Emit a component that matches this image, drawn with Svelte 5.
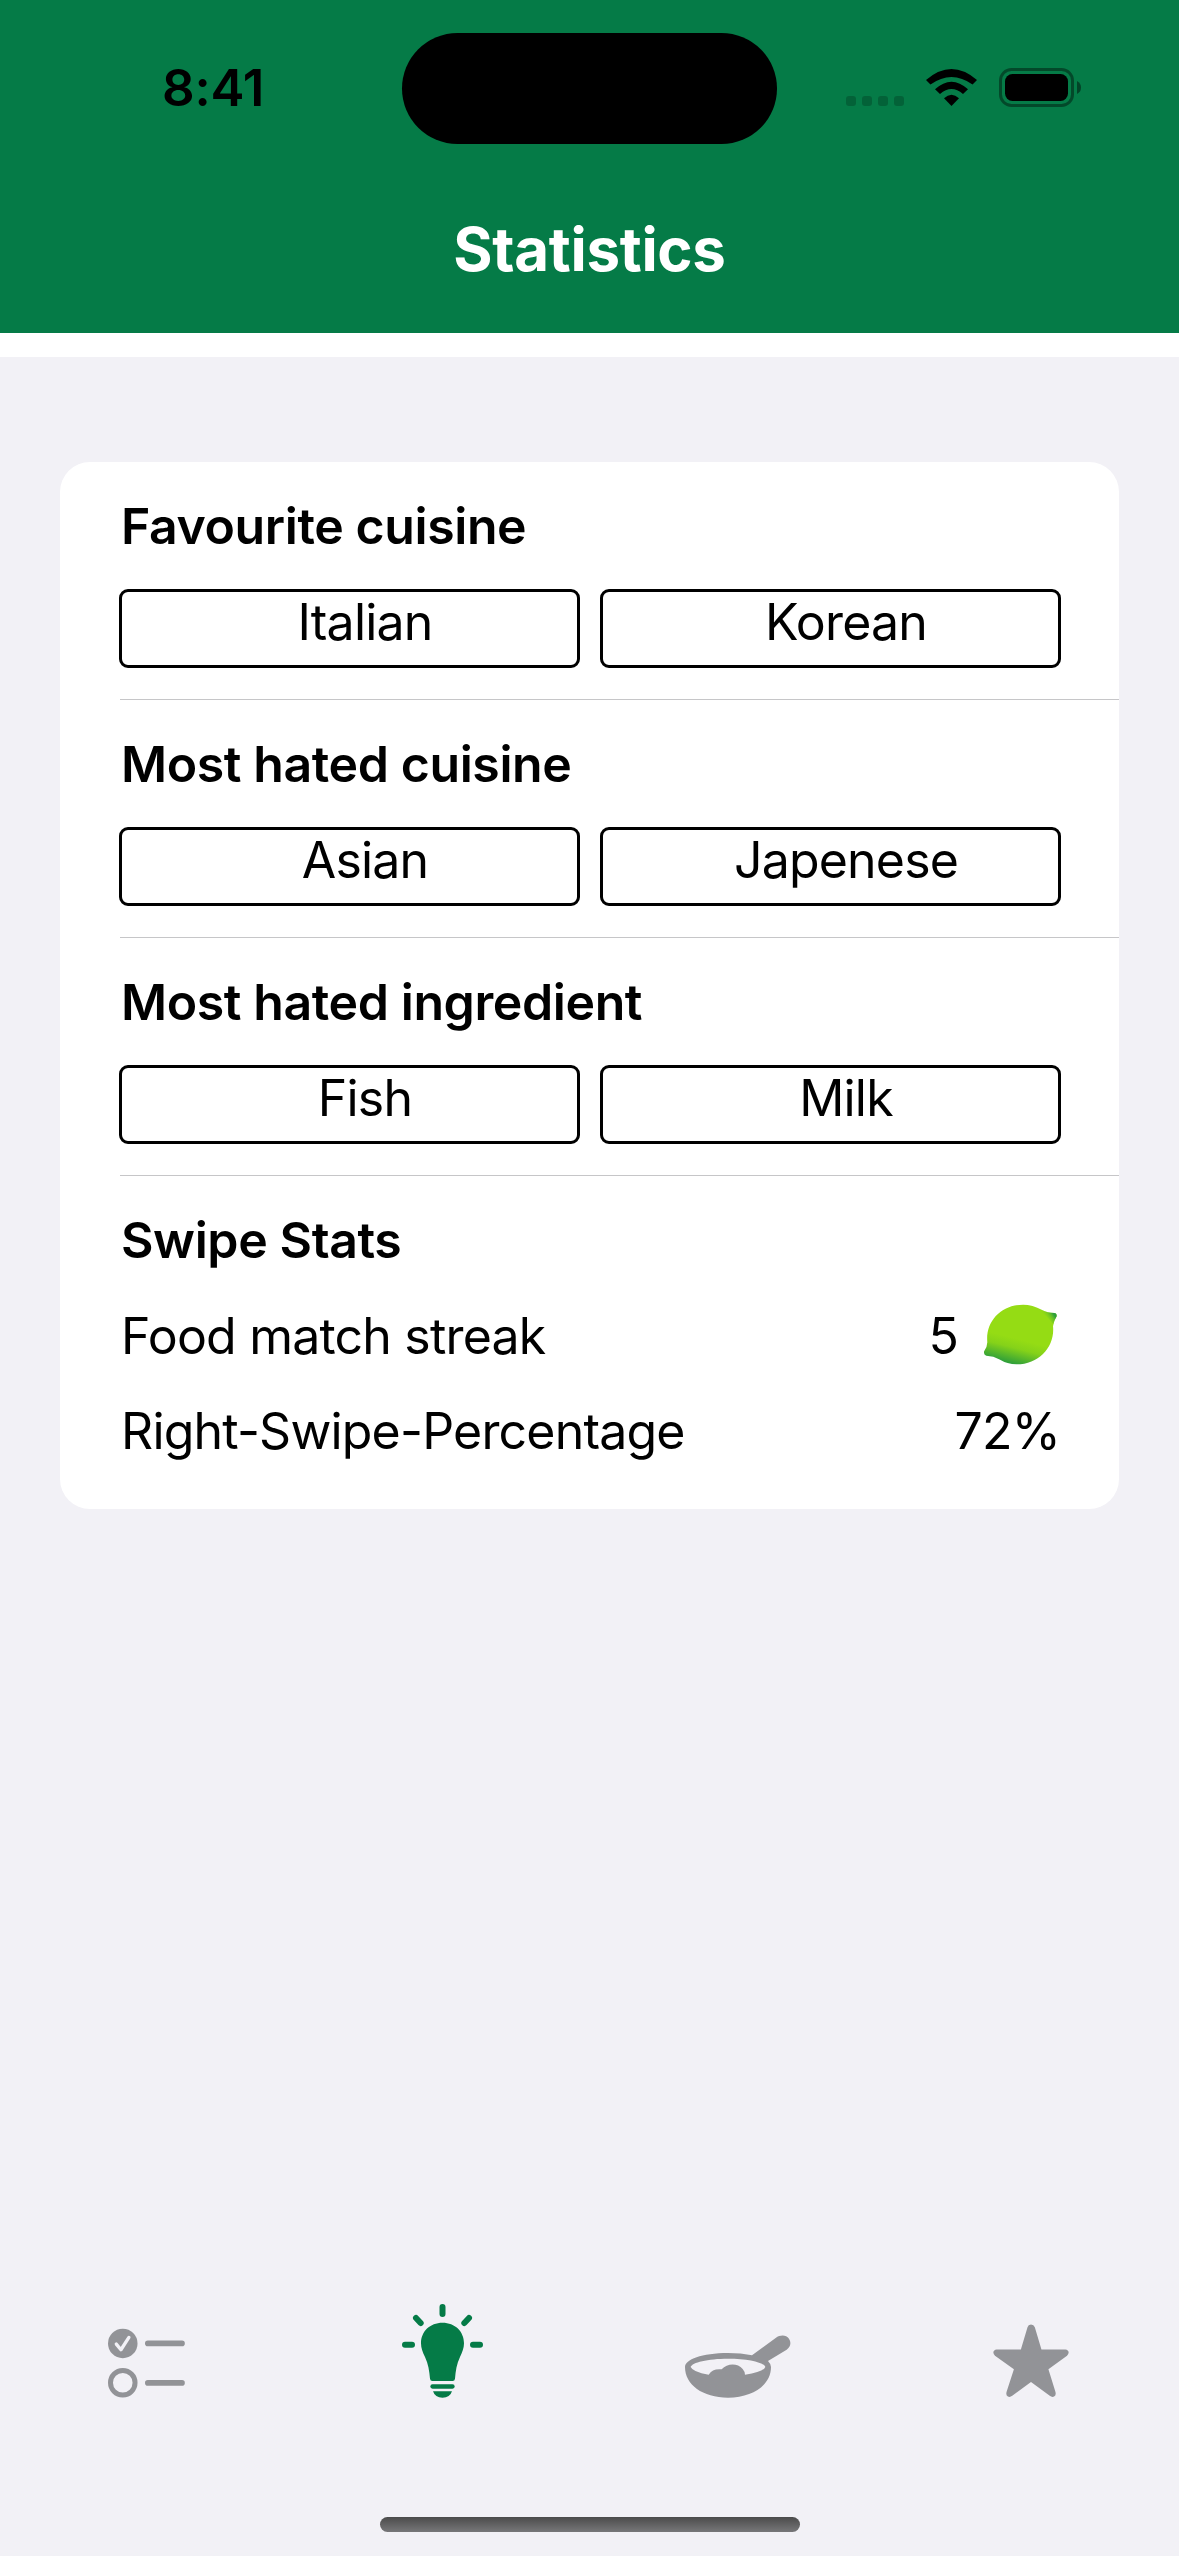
<script>
  const favourites = [
    { title: "Favourite cuisine", options: ["Italian", "Korean"] },
    { title: "Most hated cuisine", options: ["Asian", "Japenese"] },
    { title: "Most hated ingredient", options: ["Fish", "Milk"] },
  ];

  let streak = 5;
  let percentage = 72;
</script>

<div class="screen">
  <header>
    <div class="status-bar">
      <span class="time">8:41</span>
      <div class="island"></div>
      <div class="indicators">
        <svg class="signal" viewBox="0 0 58 10">
          {#each [0, 16, 32, 48] as x}
            <rect {x} y="0" width="10" height="10" rx="3" />
          {/each}
        </svg>
        <svg class="wifi" viewBox="926 69 51 37">
          <path d="M926 80Q951.5 58 977 80L972.5 84.5Q951.5 69.5 930.5 84.5Z" />
          <path d="M935 89.3Q951.5 74 968 89.3L963 94Q951.5 84 940 94Z" />
          <path d="M944 98.3Q951.5 91 959 98.3L951.5 106Z" />
        </svg>
        <svg class="battery" viewBox="0 0 82 39">
          <rect x="1.5" y="1.5" width="72" height="36" rx="11" fill="none" stroke="#000" stroke-opacity="0.4" stroke-width="3" />
          <rect x="6" y="6" width="63" height="27" rx="7.5" />
          <path d="M78 13Q82 15 82 19.500Q82 24 78 26Z" opacity="0.45" />
        </svg>
      </div>
    </div>
    <h1>Statistics</h1>
  </header>

  <main>
    <div class="card">
      {#each favourites as { title, options }}
        <section>
          <h2>{title}</h2>
          <div class="options">
            {#each options as option}
              <div class="option">{option}</div>
            {/each}
          </div>
        </section>
      {/each}

      <section class="stats">
        <h2>Swipe Stats</h2>
        <div class="stat">
          <span>Food match streak</span>
          <span class="value">
            {streak}
            <svg class="lime" viewBox="372 404 220 182">
              <defs>
                <linearGradient id="lime" gradientUnits="userSpaceOnUse" x1="486" y1="512" x2="466" y2="590">
                  <stop offset="0" stop-color="#95dc14" />
                  <stop offset="0.35" stop-color="#85d219" />
                  <stop offset="1" stop-color="#269a3d" />
                </linearGradient>
                <linearGradient id="tip" gradientUnits="userSpaceOnUse" x1="553" y1="444" x2="578" y2="427">
                  <stop offset="0" stop-color="#95dc14" stop-opacity="0" />
                  <stop offset="1" stop-color="#2d9e3d" />
                </linearGradient>
              </defs>
              <path
                fill="url(#lime)"
                d="M490 405Q518 405 547 421Q563 430 584 430Q592 431 591 440Q581 456 580 470C586 530 540 585 470 585Q442 584 419 570Q401 560 379 559Q371 557 372 546Q382 532 382 518C376 455 424 405 490 405Z" />
              <path fill="url(#tip)" d="M525 411Q536 415 547 421Q563 430 584 430Q592 431 591 440Q583 453 581 464Q565 440 525 411Z" />
            </svg>
          </span>
        </div>
        <div class="stat">
          <span>Right-Swipe-Percentage</span>
          <span class="value">{percentage}%</span>
        </div>
      </section>
    </div>
  </main>

  <nav>
    <div class="tab">
      <svg width="77" height="70" viewBox="84 146 232 208">
        <circle cx="128.500" cy="191" r="44.500" fill="currentColor" />
        <path d="M109 193L123 210L147 173" fill="none" stroke="#f2f1f6" stroke-width="10" stroke-linecap="round" stroke-linejoin="round" />
        <circle cx="128.500" cy="309.500" r="37" fill="none" stroke="currentColor" stroke-width="15" />
        <path d="M204 191H307M204 310H307" stroke="currentColor" stroke-width="17" stroke-linecap="round" />
      </svg>
    </div>
    <div class="tab active">
      <svg width="81" height="94" viewBox="966 70 243 282">
        <path
          fill="currentColor"
          d="M1087.500 126C1125 126 1152 152 1152 188C1152 203 1147 214 1140 229C1130 250 1127 270 1125 294Q1124 301 1118 301H1057Q1051 301 1050 294C1048 270 1045 250 1035 229C1028 214 1023 203 1023 188C1023 152 1050 126 1087.500 126Z" />
        <rect x="1051" y="311" width="73" height="13" rx="6.500" fill="currentColor" />
        <path d="M1059 332H1116Q1110 351 1087.500 351Q1065 351 1059 332Z" fill="currentColor" />
        <path
          d="M1087.500 79V100M1008 112L1022 127M1167 112L1153 127M975 192H996M1179 192H1200"
          stroke="currentColor"
          stroke-width="18"
          stroke-linecap="round" />
      </svg>
    </div>
    <div class="tab pan">
      <svg width="106" height="63" viewBox="75 106 318 189">
        <path
          fill="currentColor"
          fill-rule="evenodd"
          d="M276 167L347 115C361 105 378 105 387 117C395 129 391 143 380 150L324 184Q333 193 333 202C333 255 280 294 204 294C128 294 75 255 75 202C75 180 125 160 204 160Q243 160 276 167ZM92 202Q98 217 146 225Q158 206 185 209C202 190 233 190 248 208Q255 216 255 225Q310 217 316 202C312 188 265 177 204 177C143 177 96 188 92 202Z" />
      </svg>
    </div>
    <div class="tab">
      <svg width="76" height="74" viewBox="999 71 229 222">
        <path
          fill="currentColor"
          d="M1103 80Q1105 72 1113.500 72Q1122 72 1125 80L1145 147H1217Q1226 148 1227 156Q1227 161 1222 166L1166 207L1187 275Q1190 285 1183 289Q1177 292 1170 287L1113.500 245L1057 287Q1050 292 1044 289Q1037 285 1040 275L1062 207L1005 166Q1000 161 1000 156Q1001 148 1010 147H1083Z" />
      </svg>
    </div>
  </nav>

  <div class="home-indicator"></div>
</div>

<style>
  :global(body) {
    margin: 0;
  }

  .screen {
    display: flex;
    flex-direction: column;
    width: 1179px;
    height: 2556px;
    background: #f2f1f6;
    color: #000;
    font-family: Inter, "Liberation Sans", sans-serif;
    font-size: 50px;
    line-height: 60px;
    letter-spacing: -0.8px;
    overflow: hidden;
  }

  header {
    box-sizing: border-box;
    height: 357px;
    background: #057b47;
    border-bottom: 24px solid #fff;
  }

  .status-bar {
    display: grid;
    grid-template-columns: 402px 375px 402px;
    align-items: center;
    height: 177px;
  }

  .time {
    padding: 0 0 2px 24px;
    text-align: center;
    font-size: 51px;
    font-weight: 600;
    letter-spacing: -0.2px;
  }

  .island {
    height: 111px;
    border-radius: 56px;
    background: #000;
  }

  .indicators {
    display: flex;
    align-items: center;
    padding: 0 0 2px 69px;
  }

  .signal {
    width: 58px;
    height: 10px;
    margin-top: 26px;
    opacity: 0.2;
  }

  .wifi {
    width: 51px;
    height: 37px;
    margin: 0 22px;
  }

  .battery {
    width: 82px;
    height: 39px;
  }

  h1 {
    margin: 36px 0 0;
    color: #fff;
    font-size: 60px;
    font-weight: 700;
    line-height: 72px;
    letter-spacing: -0.3px;
    text-align: center;
  }

  main {
    flex: 1;
    padding: 105px 60px 0;
  }

  .card {
    height: 1047px;
    border-radius: 30px;
    background: #fff;
  }

  section {
    box-sizing: border-box;
    height: 238px;
    margin-left: 60px;
    padding-top: 34px;
    border-bottom: 1px solid #c6c6c8;
  }

  section.stats {
    height: auto;
    border: none;
  }

  h2 {
    margin: 0 0 0 1px;
    font-size: 50px;
    font-weight: 600;
    line-height: 60px;
    letter-spacing: -0.4px;
  }

  .options {
    display: grid;
    grid-template-columns: 461px 461px;
    gap: 20px;
    margin: 33px 0 0 -1px;
  }

  .option {
    box-sizing: border-box;
    height: 79px;
    padding-left: 31px;
    border: 3px solid #000;
    border-radius: 9px;
    text-align: center;
  }

  .stat {
    display: flex;
    justify-content: space-between;
    align-items: center;
    height: 60px;
    margin: 35px 59px 0 1px;
  }

  .stat:first-of-type {
    margin-top: 36px;
  }

  .value {
    display: flex;
    align-items: center;
    gap: 26px;
  }

  .lime {
    width: 73px;
    height: 61px;
    margin: 0 3px 3px 0;
  }

  nav {
    display: grid;
    grid-template-columns: repeat(4, 1fr);
    align-items: end;
    height: 98px;
  }

  .tab {
    display: flex;
    justify-content: center;
    padding-right: 2px;
    color: #929397;
  }

  .tab.active {
    padding-right: 0;
    color: #057b47;
  }

  .tab.pan {
    padding: 0 0 0 2px;
  }

  .home-indicator {
    width: 420px;
    height: 15px;
    margin: 119px auto 24px;
    border-radius: 8px;
    background: linear-gradient(#4b4b4b, #777779);
  }
</style>
